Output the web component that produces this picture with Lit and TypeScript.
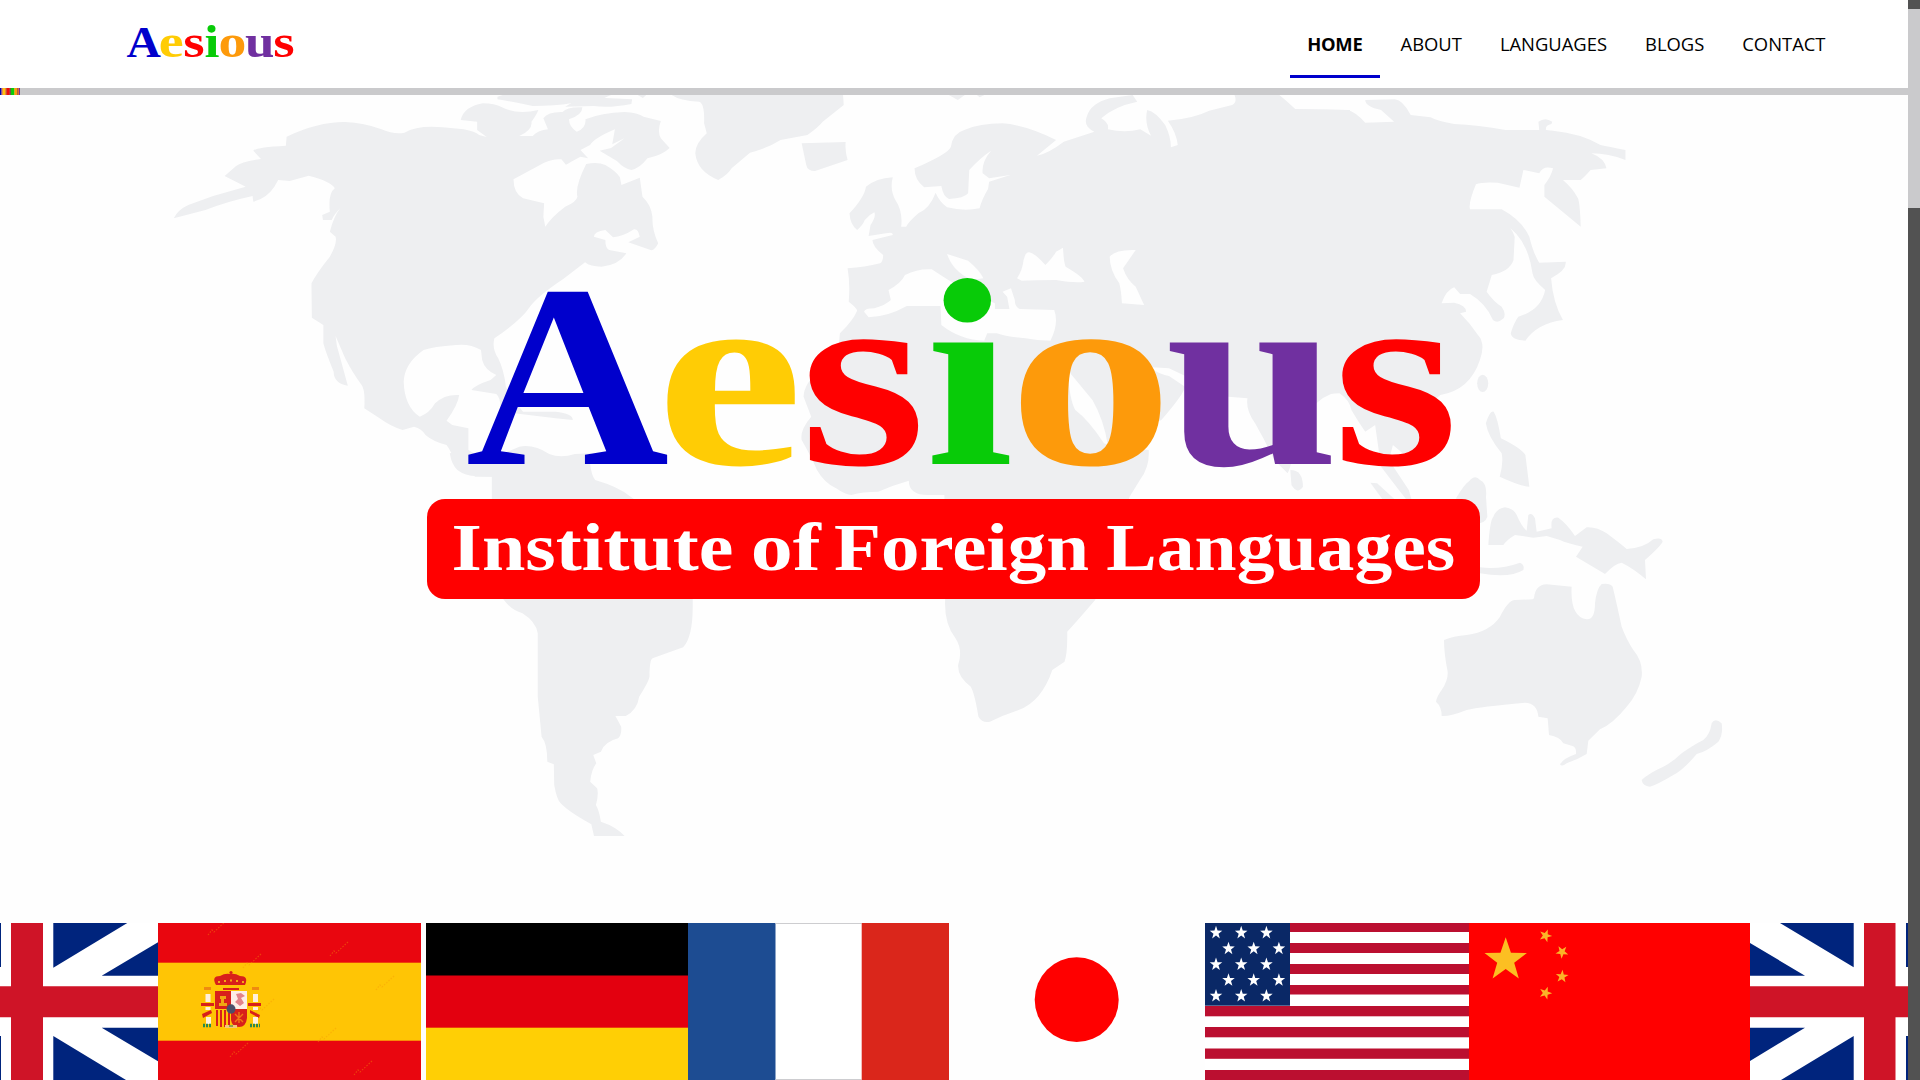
import { LitElement, html, svg, css } from "lit";
import { customElement, property } from "lit/decorators.js";

interface Glyph {
  char: string;
  color: string;
  x: number;
  sx: number;
  sy: number;
}

const GLYPHS: Glyph[] = [
  { char: "A", color: "#0000cc", x: 465.6, sx: 1.076, sy: 0.996 },
  { char: "e", color: "#ffcc05", x: 656, sx: 1.267, sy: 1.01 },
  { char: "s", color: "#ff0000", x: 799.8, sx: 1.238, sy: 1.01 },
  { char: "i", color: "#08cb08", x: 925.4, sx: 1.215, sy: 1.01 },
  { char: "o", color: "#fd9a0b", x: 1008.4, sx: 1.257, sy: 1.01 },
  { char: "u", color: "#7030a0", x: 1165.1, sx: 1.195, sy: 1.01 },
  { char: "s", color: "#ff0000", x: 1332.5, sx: 1.238, sy: 1.01 },
];

@customElement("brand-wordmark")
export class BrandWordmark extends LitElement {
  static styles = css`
    :host { display: block; }
    .mark { display: block; width: 100%; height: 100%; overflow: visible; }
    .glyph { font: bold 262px "Liberation Serif", "Times New Roman", serif; }
    .stem { clip-path: url(#below-dot); }
  `;
  render() {
    return html`<svg class="mark" viewBox="468 278 984 190" preserveAspectRatio="none">
      <clipPath id="below-dot"><rect x="-20" y="-132" width="140" height="160"></rect></clipPath>
      ${GLYPHS.map(
        (g) => svg`<text class="glyph ${g.char === "i" ? "stem" : ""}" fill=${g.color}
          transform="matrix(${g.sx} 0 0 ${g.sy} ${g.x} 464)">${g.char}</text>`,
      )}
      <ellipse cx="967.3" cy="300.3" rx="23.7" ry="22.3" fill="#08cb08"></ellipse>
    </svg>`;
  }
}

@customElement("world-map")
export class WorldMap extends LitElement {
  static styles = css`
    :host { display: block; }
    .map { display: block; width: 100%; height: 100%; }
    .land { fill: #eeeff1; }
    .sea { fill: #fefefe; }
  `;
  render() {
    return html`<svg class="map" viewBox="0 95 1908 828">
      <!-- North America and Greenland -->
      <g class="land" transform="translate(150 90) scale(.38265 .33333)">
        <path d="M62 385Q72 360 100 345L165 318L250 290L195 258L225 228Q240 215 290 207L270 182Q275 172 355 167L357 140Q440 95 510 96Q560 98 605 118Q640 135 665 128Q700 105 765 112L820 118Q850 125 860 135L880 141L855 120L855 95L812 90Q820 50 870 40Q900 40 920 52Q960 75 1015 60Q1010 75 997 95Q1000 120 965 138L1000 138Q1015 120 1040 118L1028 85Q1040 65 1078 66Q1090 50 1130 52Q1130 75 1095 88Q1095 110 1115 125Q1140 115 1138 88Q1180 68 1240 66Q1275 68 1290 80L1335 93Q1325 125 1335 145L1358 174Q1340 195 1300 205Q1280 235 1258 240Q1240 237 1220 213L1175 182L1205 174L1240 145L1208 163L1215 118Q1160 145 1150 165L1125 180L1145 205L1125 200Q1100 215 1087 224L1075 208Q1055 205 1030 218L950 268Q950 310 975 325L1030 340L1028 380L1033 410Q1050 380 1085 350Q1115 335 1117 320Q1110 290 1140 222Q1170 215 1190 225Q1220 245 1228 262L1232 285L1280 263L1287 320Q1310 345 1313 380Q1312 420 1328 460Q1320 480 1310 481L1250 457L1280 440Q1275 415 1265 418Q1235 440 1210 442L1190 420Q1160 425 1160 440L1190 450Q1190 475 1200 480L1245 490Q1225 525 1180 530Q1150 530 1137 517L1080 567Q1010 620 990 655Q970 690 900 745Q893 775 910 805Q925 840 930 890Q945 925 975 965L1060 965Q1105 970 1105 990L1060 985L915 965Q918 925 905 912L840 900Q850 885 890 870L905 855Q875 840 868 810L865 780Q835 760 800 765Q740 770 715 780Q665 820 663 875Q665 950 705 980Q730 970 745 940Q770 912 808 915Q805 945 775 992L790 1005L832 1015L832 1080L900 1160L850 1160Q830 1145 800 1120Q785 1080 775 1065Q740 1055 720 1035Q710 1015 690 1010L660 1020Q630 1010 600 985L560 955Q563 900 553 885Q530 850 510 805L485 738Q487 770 495 795L517 887Q480 880 480 845Q460 790 453 760L453 705L423 683L422 580Q435 550 470 500Q490 460 485 440L470 425Q480 380 497 355Q480 375 475 390L452 390L450 375L470 365Q465 310 483 295Q475 275 415 257L365 273L335 270L325 290Q305 325 270 335L268 318Q200 335 145 360Z"/>
        <path d="M908 20L930 12L1210 12Q1150 48 1100 40Q1060 48 1000 48Q950 35 908 28Z"/>
        <path d="M1085 50Q1120 25 1150 22L1260 28L1258 42Q1200 55 1160 48Z"/>
        <path d="M1270 12h30l-12 12z"/>
        <path d="M1360 12Q1380 32 1435 35Q1450 40 1448 100L1455 130Q1425 160 1425 190Q1430 245 1485 270Q1510 255 1520 235L1568 188Q1613 175 1648 150L1718 135Q1748 110 1758 95L1813 45L1811 12Z"/>
      </g>
      <!-- South America -->
      <g class="land" transform="translate(400 440) scale(.38265 .33333)">
        <path d="M130 40Q135 75 150 90Q170 108 200 108L240 110L240 300L270 478Q290 510 320 520Q355 545 360 580L360 770L370 890Q385 910 385 965L402 973L403 1035Q410 1080 420 1090Q440 1115 500 1153L507 1188L587 1188Q565 1160 525 1145Q520 1110 512 1095Q520 1060 515 1045L497 1025Q500 990 513 970L505 945L525 935Q535 905 570 895Q580 885 578 860L563 828L590 828Q620 810 625 770Q650 725 652 710Q652 660 660 655L740 622Q765 590 765 500L765 300L600 168Q570 140 510 120Q500 105 497 72L500 40L457 42Q420 55 390 42Q350 12 312 20L270 40L220 60L179 30Z"/>
      </g>
      <!-- Europe, Africa and western Asia -->
      <g transform="translate(750 90) scale(.38265 .33333)">
        <path class="land" d="M135 160L250 156Q248 185 255 210L170 243Q150 243 147 225ZM515 12h50l-22 18zM590 12h28l-18 10z"/>
        <path class="land" d="M303 290Q300 320 260 370Q262 405 280 420Q295 405 300 390Q310 375 325 367Q330 380 315 405L310 438L355 430Q375 425 373 435L320 450Q320 470 348 495Q348 515 340 520Q300 532 255 535Q262 580 258 635Q280 655 280 662Q270 690 235 730L232 765Q210 800 190 830Q140 880 140 920L160 980Q130 1020 135 1050Q160 1100 175 1140Q195 1180 225 1195Q250 1215 265 1215Q295 1205 335 1205Q375 1185 415 1172Q415 1215 465 1215L508 1215L510 1530Q507 1600 537 1645Q557 1680 544 1725Q542 1760 577 1790Q587 1810 597 1880Q607 1900 627 1895Q662 1875 702 1860Q762 1835 790 1740L822 1715Q830 1690 829 1625Q842 1610 902 1530L992 1220L1019 1170Q1045 1130 1042 1080L935 1065L1075 990Q1135 910 1137 890L1095 858Q1040 845 985 770Q1030 832 1050 832L1095 835L1150 865Q1200 900 1250 920L1300 925Q1295 960 1320 1000Q1345 1050 1370 1110L1405 1150Q1420 1120 1415 1050Q1430 1000 1480 940Q1510 905 1568 900L1568 60L1425 57Q1400 30 1380 12L1265 12Q1275 35 1260 45L1200 62Q1160 85 1092 92Q1115 130 1118 165L1100 172Q1100 140 1085 105Q1060 65 1038 60Q1030 100 1048 137L1020 118Q980 130 935 118Q940 100 918 85Q950 50 1012 35L1000 15L940 25Q890 40 880 80Q870 110 900 125L820 155Q780 190 750 197L800 150Q720 105 660 100Q600 100 560 120Q530 130 525 170Q520 190 430 235Q430 270 455 292L500 288Q505 320 520 327Q560 325 570 310L573 240Q600 205 630 182Q605 215 608 250L625 265L680 255L625 275L622 297Q605 330 600 355Q560 365 515 352Q495 335 485 308Q470 355 440 370Q415 395 408 410L395 410Q400 365 380 330Q365 300 373 262Q330 265 303 290Z"/>
        <path class="land" d="M1412 1140Q1445 1140 1445 1190Q1430 1215 1415 1185Z"/>
        <path class="sea" d="M298 665Q300 655 325 655Q355 645 368 630L362 600Q395 580 405 555Q440 535 475 538L505 560L560 600L640 640L640 657L678 657L672 620L660 605L682 595L692 630Q692 650 705 657L795 660Q808 700 785 752Q750 752 720 745Q670 740 645 730L620 730L612 752Q550 750 500 705L498 648L410 648Q360 680 310 682Z"/>
        <path class="sea" d="M515 492L570 512Q600 540 610 565L580 570Q530 545 515 492Z"/>
        <path class="sea" d="M698 565Q712 540 715 510Q720 485 730 487Q745 490 772 525Q790 505 800 485L818 473Q820 520 825 530Q870 560 874 575Q850 580 800 570Q740 570 710 572Z"/>
        <path class="sea" d="M940 500Q955 478 1008 480L975 535Q985 570 1008 590L1030 645L972 640Q970 600 965 580Q940 540 940 500Z"/>
        <path class="sea" d="M830 840Q835 930 850 960Q885 990 925 1060L1000 1090L960 1040L935 1065Q925 990 895 930Z"/>
      </g>
      <!-- Eastern Asia -->
      <g class="land" transform="translate(1300 90) scale(.39541 .33333)">
        <path d="M0 58L120 60Q140 65 165 98L238 95L205 60Q165 50 165 30L240 28Q260 30 280 75L330 82Q350 95 390 102Q450 105 520 120L605 120L603 95Q620 80 638 95L636 102Q620 105 622 120L640 122Q710 130 760 165Q780 170 823 180L823 210Q780 190 737 190Q770 205 775 235L735 240Q720 260 710 270L665 270Q690 295 703 325Q708 340 710 410L618 320L618 285Q635 260 640 235Q615 225 605 250L565 240L555 293L500 278Q460 275 445 283Q425 340 430 358L510 358Q560 390 580 440Q590 490 605 518L672 515Q675 540 635 565Q640 640 665 690Q600 700 570 752Q535 750 533 730Q540 700 552 680Q610 660 620 600Q590 570 588 550Q575 440 515 402Q535 410 543 440L540 510Q530 545 485 555L472 605Q490 635 510 650Q522 670 515 685Q500 702 488 690Q470 640 430 612L405 612L390 592Q370 600 358 640L390 638Q420 645 420 665L405 670Q430 700 450 735Q470 760 455 810Q430 900 355 915L310 960L320 1080L280 1110L235 1065L225 1110L275 1200L290 1260L250 1200L205 1130L190 1005L165 1025Q150 1000 130 960Q125 930 100 910L60 912L0 900Z"/>
        <ellipse cx="462" cy="880" rx="14" ry="26"/>
        <path d="M470 1000Q480 960 490 965Q500 985 508 1045Q560 1075 570 1095L580 1190Q560 1190 505 1160Q515 1120 510 1090Q475 1040 470 1000Z"/>
        <path d="M178 1178L195 1180L260 1250L210 1230Z"/>
      </g>
      <!-- Islands and Oceania -->
      <g class="land" transform="translate(1400 480) scale(.33333)">
        <path d="M168 55Q195 10 208 3Q225 -18 240 0Q262 10 258 50L262 110Q255 130 230 130Z"/>
        <path d="M265 195Q270 120 280 110Q290 85 315 82Q340 85 350 105Q365 140 380 152L385 105Q395 95 405 115L410 155L455 145Q450 110 475 113Q500 130 525 168L560 142Q590 140 620 160Q660 190 680 207Q730 205 760 178Q785 170 788 185Q780 200 735 240L738 298Q700 265 665 248Q645 250 615 282L528 230L548 200Q500 190 480 180L440 168L400 173L345 165Q320 180 310 195Z"/>
        <path d="M240 262Q300 270 360 248Q375 255 370 270Q330 295 240 280Z"/>
        <path d="M402 355Q405 315 440 313L515 320Q510 410 560 418Q585 420 585 370Q590 325 605 312Q630 308 638 320Q650 370 665 440Q680 480 700 510Q730 545 725 590Q715 640 680 680Q640 730 600 748L565 782L560 822Q530 840 500 850Q485 862 480 853Q490 835 528 822Q530 800 515 797L490 790Q480 770 447 765L443 715L415 710Q412 670 375 668Q240 680 200 690Q150 710 125 708Q125 680 108 665Q110 650 125 630Q145 600 143 575Q132 520 132 480Q160 468 200 465Q270 455 300 410Q325 360 345 360L398 358Z"/>
        <path d="M725 900Q745 880 790 860Q820 845 845 820Q880 795 910 780Q930 765 935 730Q945 712 965 730Q970 765 955 785Q920 815 890 822Q850 870 820 885Q770 915 750 920Q728 918 725 900Z"/>
      </g>
    </svg>`;
  }
}

function star(cx: number, cy: number, r: number, turn = 0, squash = 1): string {
  const points: string[] = [];
  for (let i = 0; i < 10; i++) {
    const radius = i % 2 ? r * 0.4 : r;
    const a = ((turn - 90 + i * 36) * Math.PI) / 180;
    points.push(`${(cx + radius * Math.cos(a)).toFixed(2)},${(cy + radius * squash * Math.sin(a)).toFixed(2)}`);
  }
  return points.join(" ");
}

const UK_BLUE = "#00247d";
const UK_RED = "#cf1427";

const ukLeft = svg`
  <rect width="159" height="157" fill="#fff"/>
  <path fill=${UK_BLUE} d="M0 0h1v44h-1zM0 113h1v44h-1zM53.3 0H127.3L53.3 44.7zM158.3 19V52.7H101.7zM101.7 104.7H158.3V138.5zM53.3 113L126 157H53.3z"/>
  <path fill=${UK_RED} d="M11 0h32v157h-32zM0 63.3h158.5v31H0z"/>`;

const ukRight = svg`
  <rect width="159" height="157" fill="#fff"/>
  <path fill=${UK_BLUE} d="M30 0H103.7V44.3zM0 20L55 52.7H0zM0 104.7H55L0 138zM103.7 113V157H31zM156 0h2v44h-2zM156 113h2v44h-2z"/>
  <path fill=${UK_RED} d="M114 0h31.5v157H114zM0 63.3h159v31H0z"/>`;

const MARKS = [[50, 10], [172, 31], [85, 43], [160, 117], [72, 132], [196, 150], [98, 88], [218, 65]];

const spain = svg`
  <rect width="263" height="157" fill="#e9060f"/>
  <rect y="39.7" width="263" height="78" fill="#ffc505"/>
  ${MARKS.map(([x, y]) => svg`<path d="M${x} ${y + 2}l4-5 2 2 12-11" fill="none" stroke="#f5960a" stroke-width="1.2" stroke-dasharray="1.5 1.5" opacity=".4"/>`)}
  <g fill="#d8201b">
    <path d="M58 62q-5-9 4-9 5-3 10-2 5-1 10 2 9 0 5 9z"/>
    <circle cx="73" cy="49.5" r="1.6"/>
    <rect x="65" y="65" width="16" height="2"/>
    <path d="M57 68h16v18h-16z"/>
    <path d="M73 86h16v9q-1 9-8 9t-8-7z"/>
    <path d="M43 80h13v3h-13zM44 91l9-4 1 3-9 5zM90 80h13v3H90zM92 87l10 5-1 3-9-5z"/>
  </g>
  <path d="M60 59h2M66 58h2M72 57.500h2M78 58h2M84 59h2" stroke="#f5a812" stroke-width="2"/>
  <path d="M46 64h7v3h-7zM94 64h7v3h-7z" fill="#ef8a10"/>
  <path d="M47.5 71h5v8h-5zM47.5 84h5v3h-5zM48 94h5v7h-5zM95 71h5v8h-5zM95 84h5v3h-5zM95 94h5v7h-5z" fill="#fff0dc"/>
  <path d="M73 68h16v18H73z" fill="#fdeee6"/>
  <path d="M78 71l5-1 4 3-4 2 3 5-4 3-5-4 3-3z" fill="#e3838a"/>
  <path d="M59 87v16M63 87v17M67 87v17M71 90v14" stroke="#d8201b" stroke-width="2"/>
  <path d="M62 73h6v3h-2v4h3v3h-8v-3h2v-4h-1z" fill="#f0a712"/>
  <path d="M77 91l8 8M85 91l-8 8M81 89v11" stroke="#f07a12" stroke-width="1.4"/>
  <ellipse cx="73" cy="86" rx="4.5" ry="4.7" fill="#4b4f69"/>
  <path d="M45 102.5h9M92 102.5h10" stroke="#2b8a4a" stroke-width="3.4" stroke-dasharray="2 1"/>
  <path d="M67 103.5h12" stroke="#f4c67c" stroke-width="3"/>
  <path d="M71 103h4" stroke="#6a9a3a" stroke-width="1.5"/>`;

const germany = svg`
  <rect width="262" height="53" fill="#000"/>
  <rect y="52.5" width="262" height="52.5" fill="#e3000f"/>
  <rect y="104.7" width="262" height="53" fill="#ffcf05"/>`;

const france = svg`
  <rect width="261" height="157" fill="#fff"/>
  <rect width="87.5" height="157" fill="#1d4c92"/>
  <path d="M87.5 .5h86M87.5 156.5h86" stroke="#cdcdd0"/>
  <rect x="173.7" width="87.3" height="157" fill="#da261b"/>`;

const japan = svg`
  <rect width="256" height="157" fill="#fefefe"/>
  <ellipse cx="127.7" cy="76.7" rx="42" ry="42.4" fill="#ff0000"/>`;

const US_STRIPES = [[0, 9], [20, 10], [41, 10], [62, 9.5], [83, 10.3], [104, 10.3], [125.5, 10.3], [147, 10]];
const US_STARS = [0, 1, 2, 3, 4].flatMap((row) =>
  [0, 1, 2].map((col) => [11 + col * 25.2 + (row % 2 ? 12.5 : 0), 9.8 + row * 15.8]),
);
const usa = svg`
  <rect width="264" height="157" fill="#fff"/>
  ${US_STRIPES.map(([y, h]) => svg`<rect y=${y} width="264" height=${h} fill="#bb0f30"/>`)}
  <rect width="85" height="82.7" fill="#0a2866"/>
  ${US_STARS.map(([x, y]) => svg`<polygon points=${star(x, y, 6.6, 0, 1.05)} fill="#fff"/>`)}`;

const china = svg`
  <rect width="281" height="157" fill="#ff0000"/>
  <polygon points=${star(36.7, 37, 22.3, 0, 1.02)} fill="#fcbf22"/>
  ${[[76.5, 12.7, 20], [93, 29, 40], [93, 53.5, 5], [76.5, 70, 20]].map(
    ([x, y, t]) => svg`<polygon points=${star(x, y, 6.7, t)} fill="#fbb428"/>`,
  )}`;

const FLAGS = [
  { width: 158, art: ukLeft },
  { width: 263, art: spain },
  { width: 5, art: svg`<rect width="5" height="157" fill="#fefefe"/>` },
  { width: 262, art: germany },
  { width: 261, art: france },
  { width: 256, art: japan },
  { width: 264, art: usa },
  { width: 281, art: china },
  { width: 158, art: ukRight },
];

@customElement("flag-strip")
export class FlagStrip extends LitElement {
  static styles = css`
    :host { display: flex; height: 157px; overflow: hidden; }
    .flag { display: block; flex: none; height: 157px; }
  `;
  render() {
    return FLAGS.map(
      (f) => html`<svg class="flag" width=${f.width} height="157" viewBox="0 0 ${f.width} 157">${f.art}</svg>`,
    );
  }
}

@customElement("site-nav")
export class SiteNav extends LitElement {
  @property() active = "HOME";
  static styles = css`
    :host { display: block; }
    .links { display: flex; gap: 4px; }
    .link {
      box-sizing: border-box;
      height: 64px;
      padding: 17px 17px 0;
      border-bottom: 3px solid transparent;
      font: 18.4px/25px "Open Sans", "Noto Sans", sans-serif;
      color: #000;
      text-decoration: none;
      white-space: nowrap;
    }
    .active { font-weight: 700; letter-spacing: -0.25px; border-bottom-color: #0000cc; }
  `;
  render() {
    return html`<nav class="links">
      ${["HOME", "ABOUT", "LANGUAGES", "BLOGS", "CONTACT"].map(
        (name) => html`<a class="link ${name === this.active ? "active" : ""}">${name}</a>`,
      )}
    </nav>`;
  }
}

const WORDS: [string, number, number][] = [
  ["Institute", 24.5, 282],
  ["of", 323.8, 70],
  ["Foreign", 407, 255],
  ["Languages", 679.3, 349],
];

@customElement("app-root")
export class AppRoot extends LitElement {
  static styles = css`
    :host { display: flex; width: 1920px; height: 1080px; overflow: hidden; background: #fff; }
    .page { display: flex; flex-direction: column; width: 1908px; flex: none; }
    .header {
      box-sizing: border-box;
      display: flex;
      justify-content: space-between;
      align-items: flex-start;
      height: 88px;
      padding: 14px 65.5px 0 127px;
      background: #fff;
    }
    .logo { width: 166.5px; height: 32.6px; margin-top: 11px; }
    .track { height: 7px; background: #cacacc; }
    .progress {
      width: 20px;
      height: 7px;
      background: linear-gradient(90deg,
        #0000b4 0 1px, #8a5a8c 1px 2px, #e08a50 2px 3px, #ffc40a 3px 5px, #e8823c 5px 6px,
        #c8502c 6px 7px, #f00a0a 7px 9px, #c83232 9px 10px, #6e5a3c 10px 11px, #08cb08 11px 14px,
        #c8b428 14px 15px, #fd9a0b 15px 17px, #a8643c 17px 18px, #e0683c 18px 19px, #7030a0 19px 20px);
    }
    .hero {
      position: relative;
      box-sizing: border-box;
      display: flex;
      flex-direction: column;
      align-items: flex-start;
      height: 828px;
      padding-top: 183px;
      background: #fefefe;
    }
    .map { position: absolute; inset: 0; }
    .title { position: relative; width: 984px; height: 190px; margin-left: 468px; }
    .banner {
      position: relative;
      width: 1053px;
      height: 100px;
      margin: 30.7px 0 0 427.3px;
      border-radius: 18px;
      background: #ff0000;
    }
    .tagline { display: block; width: 1053px; height: 100px; overflow: visible; }
    .word { font: bold 67px "Liberation Serif", "Times New Roman", serif; fill: #fff; }
    .scrollbar { box-sizing: border-box; width: 12px; padding-top: 9px; background: #525252; }
    .thumb { height: 198.7px; background: #cacacc; }
  `;
  render() {
    return html`
      <div class="page">
        <header class="header">
          <brand-wordmark class="logo"></brand-wordmark>
          <site-nav></site-nav>
        </header>
        <div class="track"><div class="progress"></div></div>
        <main class="hero">
          <world-map class="map"></world-map>
          <brand-wordmark class="title"></brand-wordmark>
          <div class="banner">
            <svg class="tagline" viewBox="0 0 1053 100">
              ${WORDS.map(
                ([text, x, w]) => svg`<text class="word" x=${x} y="70.6" textLength=${w} lengthAdjust="spacingAndGlyphs">${text}</text>`,
              )}
            </svg>
          </div>
        </main>
        <flag-strip></flag-strip>
      </div>
      <div class="scrollbar"><div class="thumb"></div></div>
    `;
  }
}
